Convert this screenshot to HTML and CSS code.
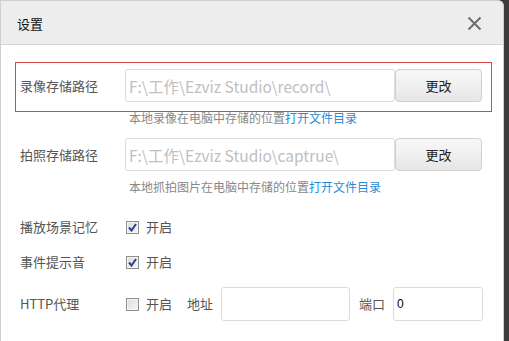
FILE: index.html
```html
<!DOCTYPE html>
<html lang="zh-CN">
<head>
<meta charset="utf-8">
<title>设置</title>
<link rel="stylesheet" href="styles.css">
</head>
<body>
<div class="dialog">
  <div class="header">
    <span class="title">设置</span>
    <svg class="close" width="15" height="15" viewBox="0 0 15 15"><path d="M1.5 1.5 L13.5 13.5 M13.5 1.5 L1.5 13.5" stroke="#6e6e6e" stroke-width="2" fill="none"/></svg>
  </div>
  <div class="content">
    <div class="field highlight">
      <span class="label">录像存储路径</span>
      <input class="path" type="text" value="F:\工作\Ezviz Studio\record\" readonly>
      <button class="btn" type="button">更改</button>
    </div>
    <div class="hint">本地录像在电脑中存储的位置<a class="link">打开文件目录</a></div>

    <div class="field second">
      <span class="label">拍照存储路径</span>
      <input class="path" type="text" value="F:\工作\Ezviz Studio\captrue\" readonly>
      <button class="btn" type="button">更改</button>
    </div>
    <div class="hint">本地抓拍图片在电脑中存储的位置<a class="link">打开文件目录</a></div>

    <div class="opt first-opt">
      <span class="label">播放场景记忆</span>
      <span class="check on"><svg width="9" height="9" viewBox="0 0 9 9"><path d="M1 4.5 L3.5 7.5 L8 1" stroke="#2f3f8f" stroke-width="2" fill="none"/></svg></span>
      <span class="on-text">开启</span>
    </div>
    <div class="opt">
      <span class="label">事件提示音</span>
      <span class="check on"><svg width="9" height="9" viewBox="0 0 9 9"><path d="M1 4.5 L3.5 7.5 L8 1" stroke="#2f3f8f" stroke-width="2" fill="none"/></svg></span>
      <span class="on-text">开启</span>
    </div>
    <div class="opt http">
      <span class="label">HTTP代理</span>
      <span class="check"></span>
      <span class="on-text">开启</span>
      <span class="sub">地址</span>
      <input class="addr" type="text" value="">
      <span class="sub port-label">端口</span>
      <input class="port" type="text" value="0">
    </div>
  </div>
</div>
</body>
</html>
```
FILE: styles.css
```css
html, body {
  margin: 0;
  padding: 0;
}
body {
  background: #3b3b3b;
  font-family: "Noto Sans CJK SC", "Liberation Sans", sans-serif;
  height: 341px;
  overflow: hidden;
}
.dialog {
  width: 504px;
  height: 341px;
  box-sizing: border-box;
  background: #fff;
  border: 1px solid #cfcfcf;
  border-bottom: none;
  border-top-right-radius: 6px;
  overflow: hidden;
}
.header {
  height: 43px;
  background: #ededed;
  border-bottom: 1px solid #d6d6d6;
  display: flex;
  align-items: center;
  justify-content: space-between;
  padding: 0 21px 0 16px;
}
.title {
  font-size: 13px;
  color: #111;
  line-height: 16px;
  margin-top: 2px;
}
.close {
  display: block;
  margin-top: 2px;
}
.content {
  padding: 17px 0 0 14px;
}
.field {
  width: 477px;
  box-sizing: border-box;
  display: flex;
  align-items: center;
  border: 1px solid transparent;
  padding: 6px 4px 9px 4px;
}
.field.highlight {
  border-color: #d24a4a;
}
.field.second {
  margin-top: 6px;
}
.label {
  width: 105px;
  flex: none;
  font-size: 13px;
  color: #555;
  line-height: 18px;
}
.path {
  width: 270px;
  height: 33px;
  box-sizing: border-box;
  border: 1px solid #dcdcdc;
  border-radius: 3px;
  padding: 0 3px;
  font-family: "Noto Sans CJK SC", "Open Sans", sans-serif;
  font-size: 15.5px;
  color: #c0c0c0;
  background: #fff;
  outline: none;
  margin: 0;
}
.btn {
  width: 87px;
  height: 33px;
  box-sizing: border-box;
  border: 1px solid #d0d0d0;
  border-radius: 4px;
  background: linear-gradient(#f8f8f8, #e6e6e6);
  font-family: "Noto Sans CJK SC", sans-serif;
  font-size: 13px;
  color: #222;
  margin: 0;
  padding: 0;
}
.hint {
  margin-top: -1px;
  padding-left: 114px;
  font-size: 12px;
  line-height: 14px;
  color: #888;
}
.link {
  color: #2a8bd2;
}
.opt {
  display: flex;
  align-items: center;
  padding-left: 5px;
  height: 22px;
  margin-top: 13px;
}
.opt.first-opt {
  margin-top: 22px;
}
.check {
  width: 13px;
  height: 13px;
  box-sizing: border-box;
  border: 1px solid #8e8e8e;
  background: linear-gradient(135deg, #dcdcdc, #f6f6f6);
  margin-left: 1px;
  display: flex;
  align-items: center;
  justify-content: center;
  box-shadow: inset 0 0 0 1px #f4f4f4;
}
.check svg {
  display: block;
}
.on-text {
  font-size: 13px;
  color: #555;
  margin-left: 7px;
  line-height: 18px;
}
.opt.http {
  height: 34px;
  margin-top: 14px;
}
.sub {
  font-size: 13px;
  color: #555;
  line-height: 18px;
  margin-left: 15px;
}
.sub.port-label {
  margin-left: 9px;
}
.addr, .port {
  height: 34px;
  box-sizing: border-box;
  border: 1px solid #dcdcdc;
  border-radius: 3px;
  background: #fff;
  margin: 0 0 0 8px;
  padding: 0 3px;
  outline: none;
  font-family: "Liberation Sans", sans-serif;
  font-size: 12px;
  color: #000;
}
.addr {
  width: 129px;
}
.port {
  width: 90px;
}
```
